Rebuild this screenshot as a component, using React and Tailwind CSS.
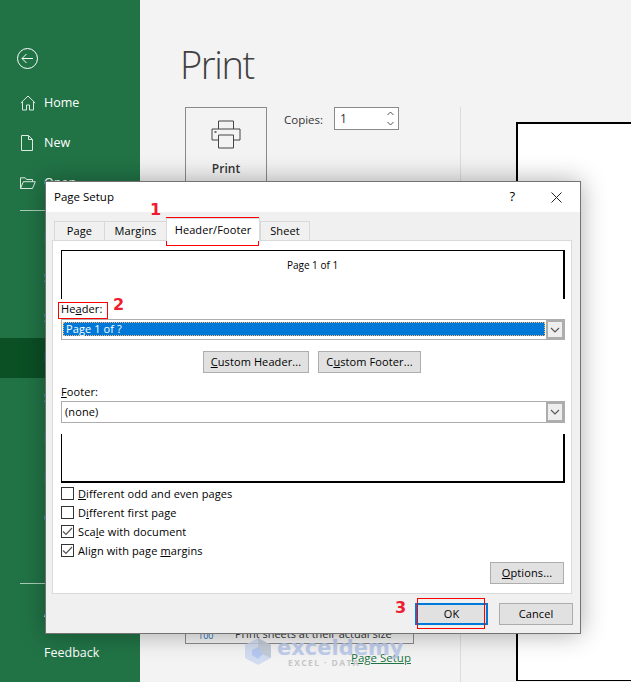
import React from 'react';

const uiFont = { fontFamily: '"Open Sans", "Noto Sans", sans-serif' };

const topNav = [
  { label: 'Home', icon: 'home' },
  { label: 'New', icon: 'new' },
  { label: 'Open', icon: 'open' },
];
const midNav = ['Info', 'Save', 'Save As', 'Print', 'Share', 'Export', 'Publish', 'Close'];
const bottomNav = ['Account', 'Feedback'];

const NavIcon = ({ name }) => {
  if (name === 'home') {
    return (
      <svg width="16" height="16" viewBox="0 0 16 16" fill="none" stroke="#dcebe2" strokeWidth="1">
        <path d="M.8 8 8 1l7.2 7M2.5 6.6v8.4h4v-5h3v5h4V6.6" />
      </svg>
    );
  }
  if (name === 'new') {
    return (
      <svg width="14" height="16" viewBox="0 0 14 16" fill="none" stroke="#dcebe2" strokeWidth="1">
        <path d="M1.5.5h7l4 4v11h-11zM8.5.5v4h4" />
      </svg>
    );
  }
  return (
    <svg width="16" height="12" viewBox="0 0 16 12" fill="none" stroke="#dcebe2" strokeWidth="1">
      <path d="M.5 11.5V.8h4.7l1.3 1.7h6v2.2M.5 11.5l2.8-6.8h12l-2.8 6.8z" />
    </svg>
  );
};

const Sidebar = () => (
  <div className="w-[140px] h-full shrink-0 flex flex-col bg-[#217346] text-white text-[12.5px]">
    <div className="h-[83px] pl-[17px] pt-[48px]">
      <svg width="21" height="21" viewBox="0 0 21 21" fill="none" stroke="white" strokeWidth="1">
        <circle cx="10.5" cy="10.5" r="10" />
        <path d="M16 10.5H5M9.5 6l-4.5 4.5L9.5 15" />
      </svg>
    </div>
    {topNav.map((item) => (
      <div key={item.label} className="h-[40px] shrink-0 flex items-center">
        <div className="w-[44px] pl-[20px]">
          <NavIcon name={item.icon} />
        </div>
        <span>{item.label}</span>
      </div>
    ))}
    <div className="h-[15px] shrink-0 pl-[20px] pt-[7px]">
      <div className="h-px bg-[#a9cdb8]" />
    </div>
    {midNav.map((label) => (
      <div
        key={label}
        className={`h-[40px] shrink-0 flex items-center pl-[44px] ${label === 'Print' ? 'bg-[#0b4f25]' : ''}`}
      >
        {label}
      </div>
    ))}
    <div className="mt-auto pl-[20px]">
      <div className="h-px bg-[#a9cdb8]" />
    </div>
    <div className="pb-[9px] pt-[9px]">
      {bottomNav.map((label) => (
        <div key={label} className="h-[40px] flex items-center pl-[44px]">
          {label}
        </div>
      ))}
    </div>
  </div>
);

const PrintArea = () => (
  <div className="flex-1 h-full flex flex-col text-[#333]">
    <div className="h-[107px] shrink-0">
      <div className="h-[30px] flex justify-end items-center pr-[2px] text-[11.5px] text-[#aaaaaa]">Print</div>
      <div className="pl-[40px] pt-[9px] text-[38px] leading-[50px] font-light tracking-[-1.4px] text-[#404040]">Print</div>
    </div>
    <div className="flex-1 flex min-h-0">
      <div className="w-[321px] shrink-0 border-r border-[#dcdcdc] pl-[45px] flex flex-col">
        <div className="flex">
          <div className="w-[82px] h-[100px] border border-[#8a8a8a] flex flex-col items-center pt-[12px]">
            <svg width="30" height="29" viewBox="0 0 30 29" fill="none" stroke="#444" strokeWidth="1">
              <path d="M7.5 9V1h15v8M7.5 20H1V9h28v11h-6.5" />
              <path d="M7.5 15h15v13h-15z" />
              <path d="M3.5 12h2" strokeWidth="1.5" />
            </svg>
            <span className="text-[12px] font-semibold mt-[11px]">Print</span>
          </div>
          <span className="ml-[17px] mt-[4px] text-[11.5px]">Copies:</span>
          <div className="ml-[11px] w-[65px] h-[23px] border border-[#8a8a8a] bg-white flex items-center justify-between pl-[5px] pr-[3px] text-[12px]">
            <span>1</span>
            <svg width="9" height="17" viewBox="0 0 9 17" fill="none" stroke="#555" strokeWidth="1">
              <path d="M1.5 5 4.5 2l3 3M1.5 12l3 3 3-3" />
            </svg>
          </div>
        </div>
        <div className="mt-[318px] w-[229px] h-[119px] border border-[#8a8a8a] flex items-end pb-[1px] text-[11px]">
          <span className="w-[49px] pl-[12px] text-[9px] text-[#1a6fb5]">100</span>
          <span className="whitespace-nowrap">Print sheets at their actual size</span>
        </div>
        <div className="pl-[166px] mt-[5px] text-[11.5px] text-[#217346] underline whitespace-nowrap">Page Setup</div>
      </div>
      <div className="flex-1 pl-[55px] pt-[15px] overflow-hidden">
        <div className="w-[200px] h-[559px] bg-white border-t-2 border-l-2 border-b border-black" />
      </div>
    </div>
  </div>
);

const ChevronButton = () => (
  <div className="w-[18px] h-full shrink-0 flex items-center justify-center bg-[#eeeeee] border-2 border-[#adadad]">
    <svg width="10" height="6" viewBox="0 0 10 6" fill="none" stroke="#555" strokeWidth="1.1">
      <path d="M1 1l4 4 4-4" />
    </svg>
  </div>
);

const Btn = ({ className = 'border border-[#adadad]', children }) => (
  <div className={`h-[22px] flex items-center justify-center bg-[#e1e1e1] text-[11px] tracking-[0.1px] ${className}`}>
    <span>{children}</span>
  </div>
);

const CheckRow = ({ checked, children }) => (
  <div className="h-[19px] flex items-center">
    <div className="w-[13px] h-[13px] bg-white border border-[#333] flex items-center justify-center">
      {checked && (
        <svg width="11" height="11" viewBox="0 0 11 11" fill="none" stroke="#555" strokeWidth="1.2">
          <path d="M1 5.5 4 8.5 10 2" />
        </svg>
      )}
    </div>
    <span className="ml-[4px] mt-[2px] text-[11px] tracking-[0.1px] whitespace-nowrap">{children}</span>
  </div>
);

const PageSetupDialog = () => (
  <div className="absolute left-[45px] top-[181px] w-[536px] h-[453px] border border-[#737373] bg-[#f0f0f0] flex flex-col text-black shadow-[0_0_24px_rgba(0,0,0,0.32)]">
    {/* title bar */}
    <div className="h-[30px] shrink-0 bg-white flex items-center pl-[8px] text-[11.5px]">
      <span className="flex-1">Page Setup</span>
      <span className="text-[13px] mr-[36px]">?</span>
      <svg className="mr-[18px]" width="11" height="11" viewBox="0 0 11 11" stroke="#222" strokeWidth="1" fill="none">
        <path d="M.5.5l10 10M10.5.5l-10 10" />
      </svg>
    </div>

    {/* tabs */}
    <div className="h-[28px] shrink-0 flex items-end pl-[8px] text-[11px] tracking-[0.1px]">
      <div className="w-[51px] h-[19px] flex items-center justify-center border border-b-0 border-[#d9d9d9]">Page</div>
      <div className="w-[61px] h-[19px] flex items-center justify-center border-t border-[#d9d9d9]">Margins</div>
      <div className="w-[94px] h-[23px] pt-[1px] flex items-center justify-center bg-white border border-b-0 border-[#d9d9d9] relative top-px z-10">Header/Footer</div>
      <div className="w-[50px] h-[19px] flex items-center justify-center border border-b-0 border-[#d9d9d9]">Sheet</div>
    </div>

    {/* tab panel */}
    <div className="ml-[6px] mr-[8px] h-[354px] shrink-0 bg-white border border-[#d9d9d9] pl-[8px] pr-[6px] pt-[9px] flex flex-col text-[11px] tracking-[0.1px]">
      <div className="h-[49px] shrink-0 border-t border-l border-black border-r-2 flex justify-center pt-[7px] text-[10px] tracking-normal">
        Page 1 of 1
      </div>
      <div className="h-[20px] shrink-0 flex items-end pb-[2px]">
        <span>He<u>a</u>der:</span>
      </div>
      <div className="h-[21px] shrink-0 border border-[#adadad] flex bg-white">
        <div className="flex-1 mt-[2px] mb-[3px] ml-[1px] mr-[1px] bg-[#0078d7] border border-dotted border-[#ffb56b] flex items-center pl-[2px] text-white">
          Page 1 of ?
        </div>
        <ChevronButton />
      </div>
      <div className="h-[22px] shrink-0 mt-[11px] flex">
        <Btn className="ml-[142px] w-[106px] border border-[#adadad]"><u>C</u>ustom Header...</Btn>
        <Btn className="ml-[9px] w-[103px] border border-[#adadad]">C<u>u</u>stom Footer...</Btn>
      </div>
      <div className="h-[19px] shrink-0 mt-[9px] pt-[2px] flex items-center">
        <span><u>F</u>ooter:</span>
      </div>
      <div className="h-[22px] shrink-0 border border-[#adadad] flex bg-white">
        <div className="flex-1 flex items-center pl-[3px]">(none)</div>
        <ChevronButton />
      </div>
      <div className="h-[49px] shrink-0 mt-[11px] border-l border-r-2 border-b-2 border-black" />
      <div className="mt-[1px] shrink-0">
        <CheckRow><u>D</u>ifferent odd and even pages</CheckRow>
        <CheckRow>D<u>i</u>fferent first page</CheckRow>
        <CheckRow checked>Sca<u>l</u>e with document</CheckRow>
        <CheckRow checked>Align with page <u>m</u>argins</CheckRow>
      </div>
      <div className="mt-[2px] mr-[1px] flex justify-end">
        <Btn className="w-[74px] border border-[#adadad]"><u>O</u>ptions...</Btn>
      </div>
    </div>

    {/* footer buttons */}
    <div className="flex justify-end pt-[9px] pr-[7px]">
      <Btn className="w-[73px] border-2 border-[#0078d7]">OK</Btn>
      <Btn className="w-[74px] ml-[11px] border border-[#adadad]">Cancel</Btn>
    </div>
  </div>
);

const Watermark = () => (
  <div className="absolute left-[244px] top-[637px] flex items-start pointer-events-none">
    <svg width="28" height="28" viewBox="0 0 28 28">
      <path d="M14 1 27 8v13l-13 7L1 21V8z" fill="#c9d6ef" fillOpacity="0.8" />
      <path d="M14 1 27 8v13l-13-6z" fill="#b9c0c8" fillOpacity="0.6" />
      <path d="M8 13l6-3 5 7-5 5-6-4z" fill="#b5c8f0" />
    </svg>
    <div className="ml-[5px] flex flex-col leading-none">
      <span className="text-[21px] font-bold text-[#b9c8ea] leading-[22px] opacity-90" style={{ fontFamily: '"DejaVu Sans", sans-serif' }}>
        exceldemy
      </span>
      <span className="pl-[11px] text-[8.5px] font-bold tracking-[1.4px] text-[#c6c6c6]">EXCEL · DATA</span>
    </div>
  </div>
);

const Num = ({ className, children }) => (
  <span className={`absolute text-[16px] leading-none font-bold text-[#ee1c2e] ${className}`} style={{ fontFamily: '"DejaVu Sans", sans-serif' }}>
    {children}
  </span>
);

const Annotations = () => (
  <>
    <Num className="left-[150px] top-[202px]">1</Num>
    <Num className="left-[113px] top-[297px]">2</Num>
    <Num className="left-[395px] top-[600px]">3</Num>
    <div className="absolute left-[166px] top-[217px] w-[93px] h-[29px] border border-[#ff0000]" />
    <div className="absolute left-[58px] top-[302px] w-[50px] h-[17px] border border-[#ff0000]" />
    <div className="absolute left-[417px] top-[598px] w-[68px] h-[31px] border border-[#ff0000]" />
  </>
);

export default function App() {
  return (
    <div className="relative w-[631px] h-[682px] overflow-hidden flex bg-[#f3f3f3]" style={uiFont}>
      <Sidebar />
      <PrintArea />
      <Watermark />
      <PageSetupDialog />
      <Annotations />
    </div>
  );
}
